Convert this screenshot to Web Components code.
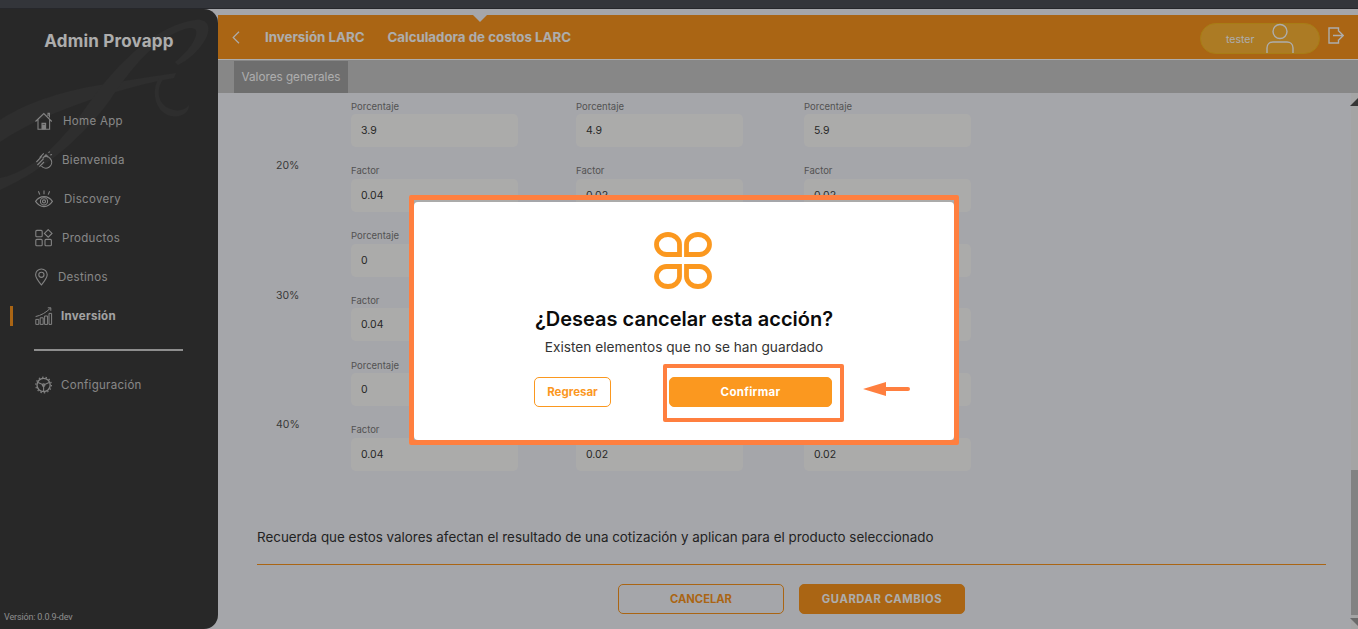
<!DOCTYPE html>
<html lang="es">
<head>
<meta charset="utf-8">
<title>Admin Provapp</title>
<style>
  html, body { margin: 0; height: 100%; overflow: hidden; }
  body { display: flex; flex-direction: column; background: #f4f5fb; font-family: Inter, "Liberation Sans", sans-serif; }
  svg { display: block; }
</style>
</head>
<body>
<top-strip></top-strip>
<app-shell>
  <side-bar slot="side" title-text="Admin Provapp" version="Versión: 0.0.9-dev">
    <nav-item label="Home App" gap="10">
      <svg slot="icon" width="18" height="18" viewBox="0 0 18 18" fill="none" stroke="currentColor" stroke-width="1.1"><path d="M.5 9.5 8.8 1.6l8 7.9M3 7.6v9.6h11.6V7.6M7 17v-5.6h3.6V17"/><path d="M13 4V1.4h1.4v4" /><path d="M7.6 13h2.4v4H7.6z" fill="currentColor"/></svg>
    </nav-item>
    <nav-item label="Bienvenida" gap="9">
      <svg slot="icon" width="18" height="18" viewBox="0 0 18 18" fill="none" stroke="currentColor" stroke-width="1.1"><path d="M9 5.800A5.800 5.800 0 1 1 6.400 15"/><path d="M1.400 11 7 5.200M2.400 14 8.600 7.600M4.400 15.600 9 11M4.600 6.600 8.800 2.400M7.600 7.400l3.400-3.600 2.200 2M13.400 1.600l1.600-1M15.200 4l1.800-.6"/></svg>
    </nav-item>
    <nav-item label="Discovery" gap="11">
      <svg slot="icon" width="18" height="18" viewBox="0 0 18 18" fill="none" stroke="currentColor" stroke-width="1.1"><path d="M.6 11.400C3 7.800 6 6.600 9 6.600s6 1.200 8.400 4.800C15 15 12 16.600 9 16.600S3 15 .6 11.400Z"/><circle cx="9" cy="11.400" r="3.600"/><circle cx="9" cy="11.400" r="1.500"/><path d="M9 .6v3.600M3.400 1.200l1.400 3.400M14.600 1.200l-1.400 3.400"/></svg>
    </nav-item>
    <nav-item label="Productos" gap="9">
      <svg slot="icon" width="18" height="18" viewBox="0 0 18 18" fill="none" stroke="currentColor" stroke-width="1.1"><rect x=".8" y="1.400" width="6.400" height="6.400" rx="1"/><rect x=".8" y="10.400" width="6.400" height="6.400" rx="1"/><rect x="10" y="10.400" width="6.400" height="6.400" rx="1"/><path d="m13.200.6 3.800 3.800-3.800 3.800-3.800-3.800Z"/></svg>
    </nav-item>
    <nav-item label="Destinos" gap="5">
      <svg slot="icon" width="18" height="18" viewBox="0 0 18 18" fill="none" stroke="currentColor" stroke-width="1.1"><path d="M6.400 17C3 12.800.6 10 .6 6.800a5.800 5.800 0 0 1 11.600 0C12.200 10 9.800 12.800 6.400 17Z"/><circle cx="6.400" cy="6.800" r="2.600"/></svg>
    </nav-item>
    <nav-item label="Inversión" gap="8" active>
      <svg slot="icon" width="18" height="18" viewBox="0 0 18 18" fill="none" stroke="currentColor" stroke-width="1"><path d="M.8 12.400h3v5h-3zM5.200 10.800h3v6.600h-3zM9.600 9h3v8.400h-3zM14 6.400h2.600v11H14z"/><path d="M.6 9.600C6 8.400 11 5.600 15.400 1.200M12.800.8h3v3"/></svg>
    </nav-item>
    <hr slot="below">
    <nav-item slot="below" label="Configuración" gap="8">
      <svg slot="icon" width="18" height="18" viewBox="0 0 18 18" fill="none" stroke="currentColor" stroke-width="1.1"><circle cx="8.600" cy="9" r="6.600" stroke-width="1.300"/><circle cx="8.600" cy="9" r="7.800" stroke-dasharray="1.400 2.100" stroke-width="1.200"/><path d="M3 6.600 8.600 9l5.600-2.400M8.600 9v6"/><circle cx="8.600" cy="9" r="1.300"/></svg>
    </nav-item>
  </side-bar>

  <top-header slot="head" back="Inversión LARC" current="Calculadora de costos LARC" user="tester"></top-header>
  <tab-bar slot="head" label="Valores generales"></tab-bar>

  <rate-group pct="20%">
    <rate-field label="Porcentaje" value="3.9"></rate-field><rate-field label="Porcentaje" value="4.9"></rate-field><rate-field label="Porcentaje" value="5.9"></rate-field>
    <rate-field label="Factor" value="0.04"></rate-field><rate-field label="Factor" value="0.02"></rate-field><rate-field label="Factor" value="0.02"></rate-field>
  </rate-group>
  <rate-group pct="30%">
    <rate-field label="Porcentaje" value="0"></rate-field><rate-field></rate-field><rate-field></rate-field>
    <rate-field label="Factor" value="0.04"></rate-field><rate-field></rate-field><rate-field></rate-field>
  </rate-group>
  <rate-group pct="40%">
    <rate-field label="Porcentaje" value="0"></rate-field><rate-field></rate-field><rate-field></rate-field>
    <rate-field label="Factor" value="0.04"></rate-field><rate-field value="0.02"></rate-field><rate-field value="0.02"></rate-field>
  </rate-group>
  <form-footer note="Recuerda que estos valores afectan el resultado de una cotización y aplican para el producto seleccionado" cancel="CANCELAR" save="GUARDAR CAMBIOS"></form-footer>
</app-shell>
<confirm-modal heading="¿Deseas cancelar esta acción?" text="Existen elementos que no se han guardado" back="Regresar" ok="Confirmar"></confirm-modal>

<script>
class TopStrip extends HTMLElement {
  constructor() {
    super();
    this.attachShadow({ mode: "open" });
    this.shadowRoot.innerHTML = `<style>
      :host { display: block; height: 8px; background: #33353a; border-bottom: 1px solid #26272b; flex: none; }
    </style>`;
  }
}
customElements.define("top-strip", TopStrip);

class AppShell extends HTMLElement {
  constructor() {
    super();
    this.attachShadow({ mode: "open" });
    this.shadowRoot.innerHTML = `<style>
      :host { display: flex; flex: 1; min-height: 0; }
      .main { flex: 1; min-width: 0; display: flex; flex-direction: column; padding-top: 6px; }
      .body { flex: 1; min-height: 0; display: flex; }
      .content { flex: 1; min-width: 0; padding: 7.500px 25px 0 39px; overflow: hidden; display: flex; flex-direction: column; gap: 18.300px; }
      .bar { width: 7px; flex: none; background: #f2f2f2; display: flex; flex-direction: column; }
      .up, .down { height: 14px; display: flex; align-items: center; justify-content: flex-end; }
      .up::after { content: ""; border: 4px solid transparent; border-right-color: #505050; border-bottom-color: #505050; margin-top: 4px; }
      .down::after { content: ""; border: 4px solid transparent; border-right-color: #9c9c9c; border-top-color: #9c9c9c; }
      .track { flex: 1; display: flex; flex-direction: column; justify-content: flex-end; }
      .thumb { height: 145px; background: #c0c0c0; }
    </style>
    <slot name="side"></slot>
    <div class="main">
      <slot name="head"></slot>
      <div class="body">
        <div class="content"><slot></slot></div>
        <div class="bar"><div class="up"></div><div class="track"><div class="thumb"></div></div><div class="down"></div></div>
      </div>
    </div>`;
  }
}
customElements.define("app-shell", AppShell);

class SideBar extends HTMLElement {
  constructor() {
    super();
    this.attachShadow({ mode: "open" });
    this.shadowRoot.innerHTML = `<style>
      :host { display: flex; flex-direction: column; flex: none; width: 218px; box-sizing: border-box; position: relative; overflow: hidden;
        background: #3c3c3c; border-radius: 0 14px 14px 0; color: #c8c8c8; }
      .mark { position: absolute; left: 0; top: -9px; }
      h1 { position: relative; margin: 0; padding-top: 20px; height: 72.500px; box-sizing: content-box; font-size: 17px; line-height: 24px; font-weight: 700; letter-spacing: .2px; color: #fff; text-align: center; }
      .list { position: relative; display: flex; flex-direction: column; }
      ::slotted(hr) { margin: 13px 35px 14.500px 34px; border: 0; height: 2px; background: #d2d2d2; }
      small { position: relative; margin-top: auto; padding: 0 0 6px 4px; font: 9px/12px Roboto, sans-serif; letter-spacing: -.15px; color: #cfcfcf; }
    </style>
    <svg class="mark" width="218" height="200" viewBox="0 0 218 200" fill="#444" aria-hidden="true">
      <path d="M0 120C30 100 70 90 100 85c30-5 55-9 76-12l-2 5c-24 4-54 12-84 22C55 112 25 125 0 142Z"/>
      <path d="M0 178c40-8 70-48 95-83 30-40 65-70 100-75 13-2 17 8 10 20-7 12-17 20-27 25l-3-3c9-7 19-18 21-27 2-7-4-8-11-6-30 9-55 41-75 71C85 135 45 170 0 190Z"/>
      <path d="M164 78c-8 10-7 24 4 30 8 4 17 3 21-3 0 8-8 13-18 11-15-3-21-24-12-38Z"/>
    </svg>
    <h1></h1>
    <div class="list"><slot></slot><slot name="below"></slot></div>
    <small></small>`;
    this.shadowRoot.querySelector("h1").textContent = this.getAttribute("title-text");
    this.shadowRoot.querySelector("small").textContent = this.getAttribute("version");
  }
}
customElements.define("side-bar", SideBar);

class NavItem extends HTMLElement {
  constructor() {
    super();
    this.attachShadow({ mode: "open" });
    this.shadowRoot.innerHTML = `<style>
      :host { display: flex; align-items: center; height: 39px; padding-left: 35px; position: relative; font-size: 11.500px; letter-spacing: .3px; color: #c8c8c8; }
      :host([active]) { font-weight: 700; color: #f0f0f0; }
      :host([active])::before { content: ""; position: absolute; left: 10px; top: 9px; width: 3px; height: 20px; background: #fb961e; }
      .icon { color: #c0c0c0; display: flex; }
      span { white-space: nowrap; }
    </style>
    <div class="icon"><slot name="icon"></slot></div><span></span>`;
    const text = this.shadowRoot.querySelector("span");
    text.textContent = this.getAttribute("label");
    text.style.marginLeft = this.getAttribute("gap") + "px";
  }
}
customElements.define("nav-item", NavItem);

class TopHeader extends HTMLElement {
  constructor() {
    super();
    this.attachShadow({ mode: "open" });
    this.shadowRoot.innerHTML = `<style>
      :host { display: flex; align-items: center; height: 44px; background: #fb961e; border-bottom: 1px solid #fff; position: relative; color: #fff; }
      .notch { position: absolute; left: 255px; top: 0; border: 7px solid transparent; border-bottom: 0; border-top-color: #f4f5fb; }
      .crumb { display: flex; align-items: center; margin-left: 14px; font-size: 13.300px; font-weight: 700; gap: 23px; white-space: nowrap; }
      .crumb span:first-of-type { margin-left: 2px; }
      .user { margin-left: auto; margin-top: 2px; display: flex; align-items: center; width: 120px; height: 31px; box-sizing: border-box; padding-left: 25px; background: #feb635; border: 1px solid #f8b81f; border-radius: 16px; font-size: 10.500px; }
      .user span { padding-top: 3px; }
      .user svg { margin-left: 12px; }
      .exit { margin: -3px 14px 0 8px; }
    </style>
    <div class="notch"></div>
    <div class="crumb">
      <svg width="8" height="13" viewBox="0 0 8 13" fill="none" stroke="#fff" stroke-width="1.200"><path d="M7 .8 1.200 6.500 7 12.200"/></svg>
      <span id="b"></span><span id="c"></span>
    </div>
    <div class="user"><span id="u"></span>
      <svg width="28" height="30" viewBox="0 0 28 30" fill="none" stroke="#fff" stroke-width="1.400"><circle cx="14" cy="8.500" r="7"/><path d="M1 30v-5c0-4 3-6 6-6h14c3 0 6 2 6 6v5"/></svg>
    </div>
    <svg class="exit" width="16" height="17" viewBox="0 0 16 17" fill="none" stroke="#fff" stroke-width="1.400"><path d="M10.500 4.500V1H1v15h9.500v-3.500M5 8.500h10M11 4.200l4.300 4.300-4.300 4.300"/></svg>`;
    this.shadowRoot.getElementById("b").textContent = this.getAttribute("back");
    this.shadowRoot.getElementById("c").textContent = this.getAttribute("current");
    this.shadowRoot.getElementById("u").textContent = this.getAttribute("user");
  }
}
customElements.define("top-header", TopHeader);

class TabBar extends HTMLElement {
  constructor() {
    super();
    this.attachShadow({ mode: "open" });
    this.shadowRoot.innerHTML = `<style>
      :host { display: flex; height: 33px; box-sizing: border-box; padding: 1px 0 0 16px; background: #c8c8c8; }
      span { display: flex; align-items: center; justify-content: center; width: 114px; background: #a2a2a2; color: #fff; font-size: 11.700px; white-space: nowrap; }
    </style><span></span>`;
    this.shadowRoot.querySelector("span").textContent = this.getAttribute("label");
  }
}
customElements.define("tab-bar", TabBar);

class RateGroup extends HTMLElement {
  constructor() {
    super();
    this.attachShadow({ mode: "open" });
    this.shadowRoot.innerHTML = `<style>
      :host { display: flex; flex: none; }
      .pct { width: 94px; box-sizing: border-box; padding: 0 0 0 19px; align-self: center; margin-top: 19px; font-size: 10.500px; color: #555; }
      .grid { display: grid; grid-template-columns: 225px 228px 167px; row-gap: 18.300px; }
    </style><div class="pct"></div><div class="grid"><slot></slot></div>`;
    this.shadowRoot.querySelector(".pct").textContent = this.getAttribute("pct");
  }
}
customElements.define("rate-group", RateGroup);

class RateField extends HTMLElement {
  constructor() {
    super();
    this.attachShadow({ mode: "open" });
    this.shadowRoot.innerHTML = `<style>
      :host { display: block; width: 167px; }
      label { display: block; height: 12px; font: 9.500px/12px Inter, sans-serif; color: #7a7a7a; margin-bottom: 1.500px; }
      div { height: 33px; box-sizing: border-box; padding-left: 10px; display: flex; align-items: center; background: #fdfdfb; border-radius: 5px; font-size: 10.500px; color: #3a3a3a; }
    </style><label></label><div></div>`;
    // the cells hidden behind the dialog have no text
    this.shadowRoot.querySelector("label").textContent = this.getAttribute("label") || "";
    this.shadowRoot.querySelector("div").textContent = this.getAttribute("value") || "";
  }
}
customElements.define("rate-field", RateField);

class FormFooter extends HTMLElement {
  constructor() {
    super();
    this.attachShadow({ mode: "open" });
    this.shadowRoot.innerHTML = `<style>
      :host { display: block; margin-top: 38.700px; }
      p { margin: 0; padding: 1px 0 19px; font-size: 13.400px; line-height: 16px; color: #333; border-bottom: 1px solid #fb961e; white-space: nowrap; }
      .actions { display: flex; justify-content: center; gap: 15px; margin-top: 19px; }
      button { width: 166px; height: 30px; box-sizing: border-box; border-radius: 5px; border: 1px solid #fb961e; font: 700 11.200px Inter, sans-serif; background: transparent; color: #fb961e; }
      .save { background: #fb961e; color: #fff; letter-spacing: .6px; }
    </style>
    <p></p>
    <div class="actions"><button id="c"></button><button id="s" class="save"></button></div>`;
    this.shadowRoot.querySelector("p").textContent = this.getAttribute("note");
    this.shadowRoot.getElementById("c").textContent = this.getAttribute("cancel");
    this.shadowRoot.getElementById("s").textContent = this.getAttribute("save");
  }
}
customElements.define("form-footer", FormFooter);

class ConfirmModal extends HTMLElement {
  constructor() {
    super();
    this.attachShadow({ mode: "open" });
    this.shadowRoot.innerHTML = `<style>
      :host { position: fixed; left: 0; right: 0; top: 9px; bottom: 0; background: rgba(0,0,0,.32); }
      .callout { position: absolute; left: 409px; top: 186px; width: 550px; height: 250px; box-sizing: border-box; border: 5px solid #ff7f3f; border-radius: 2px; }
      .dialog { position: absolute; left: 414px; top: 193px; width: 540px; height: 238px; box-sizing: border-box; padding-top: 30px; background: #fff; border-radius: 4px; display: flex; flex-direction: column; align-items: center; }
      .logo { margin-left: -2px; }
      h2 { margin: 18px 0 0; font-size: 20px; line-height: 24px; font-weight: 600; color: #0b0b0b; white-space: nowrap; }
      p { margin: 8px 0 0; font-size: 13.700px; line-height: 16px; color: #333; white-space: nowrap; }
      .actions { align-self: flex-start; display: flex; align-items: flex-start; margin: 9px 0 0 120px; gap: 52px; }
      button { box-sizing: border-box; height: 30px; border-radius: 5px; border: 1px solid #fb981f; font: 700 11.500px Inter, sans-serif; }
      .back { width: 77px; margin-top: 13px; background: #fff; color: #fb981f; }
      .mark-box { border: 4px solid #ff7f3f; padding: 9px 8px 11px 2px; border-radius: 2px; display: flex; }
      .ok { width: 163px; background: #fb981f; color: #fff; letter-spacing: .3px; }
      .arrow { position: absolute; left: 863px; top: 372px; }
    </style>
    <div class="callout"></div>
    <div class="dialog">
      <svg class="logo" width="58" height="57" viewBox="0 0 58 57" fill="none" stroke="#fb981f" stroke-width="4.800">
        <path id="p" d="M25.500 22.500H12.500A10 10 0 0 1 2.500 12.500 11.500 10 0 0 1 14 2.500 11.500 10 0 0 1 25.500 12.500Z"/>
        <use href="#p" transform="matrix(-1 0 0 1 58 0)"/>
        <use href="#p" transform="matrix(1 0 0 -1 0 57)"/>
        <use href="#p" transform="matrix(-1 0 0 -1 58 57)"/>
      </svg>
      <h2></h2>
      <p></p>
      <div class="actions">
        <button class="back"></button>
        <div class="mark-box"><button class="ok"></button></div>
      </div>
    </div>
    <svg class="arrow" width="48" height="16" viewBox="0 0 48 16" fill="#ff7f3f"><path d="M0 8 23 1v5h22a2 2 0 0 1 0 4H23v5Z"/></svg>`;
    this.shadowRoot.querySelector("h2").textContent = this.getAttribute("heading");
    this.shadowRoot.querySelector("p").textContent = this.getAttribute("text");
    this.shadowRoot.querySelector(".back").textContent = this.getAttribute("back");
    this.shadowRoot.querySelector(".ok").textContent = this.getAttribute("ok");
  }
}
customElements.define("confirm-modal", ConfirmModal);
</script>
</body>
</html>
